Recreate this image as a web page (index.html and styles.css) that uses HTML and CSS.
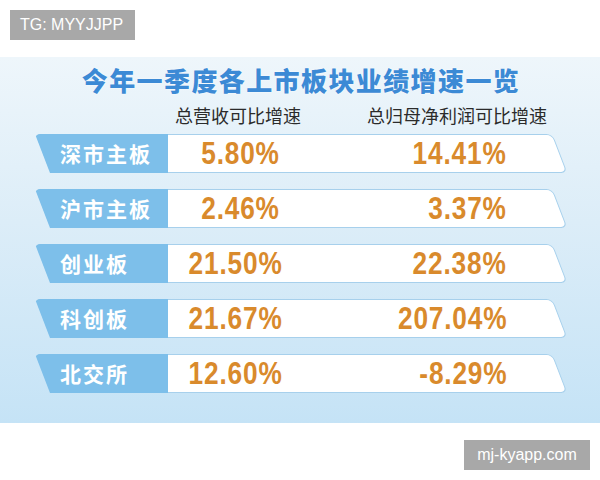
FILE: index.html
```html
<!DOCTYPE html>
<html lang="zh-CN">
<head>
<meta charset="utf-8">
<link rel="stylesheet" href="styles.css">
</head>
<body>
<div class="badge">TG: MYYJJPP</div>
<section class="panel">
  <h1 class="title">今年一季度各上市板块业绩增速一览</h1>
  <div class="heads">
    <span class="head h1">总营收可比增速</span>
    <span class="head h2">总归母净利润可比增速</span>
  </div>
  <div class="rows">
    <div class="row"><div class="label">深市主板</div><div class="vals"><span class="v1"><i>5.80%</i></span><span class="v2"><i>14.41%</i></span></div></div>
    <div class="row"><div class="label">沪市主板</div><div class="vals"><span class="v1"><i>2.46%</i></span><span class="v2"><i>3.37%</i></span></div></div>
    <div class="row"><div class="label">创业板</div><div class="vals"><span class="v1"><i>21.50%</i></span><span class="v2"><i>22.38%</i></span></div></div>
    <div class="row"><div class="label">科创板</div><div class="vals"><span class="v1"><i>21.67%</i></span><span class="v2"><i>207.04%</i></span></div></div>
    <div class="row"><div class="label">北交所</div><div class="vals"><span class="v1"><i>12.60%</i></span><span class="v2"><i>-8.29%</i></span></div></div>
  </div>
</section>
<div class="foot"><div class="mark">mj-kyapp.com</div></div>
</body>
</html>
```
FILE: styles.css
```css
html, body { margin: 0; padding: 0; background: #fff; }
body { width: 600px; height: 480px; overflow: hidden; font-family: "Noto Sans CJK SC", "Liberation Sans", sans-serif; }

.badge {
  margin: 10px 0 0 10px;
  width: 125px; height: 30px;
  box-sizing: border-box;
  padding-left: 10px;
  background: #a8a8a8;
  color: #fff;
  font: 16px/30px "Liberation Sans", Arial, sans-serif;
}

.panel {
  margin-top: 17px;
  height: 366px;
  box-sizing: border-box;
  padding-top: 7px;
  background: linear-gradient(180deg, #eef6fb 0%, #dcedf8 45%, #c5e3f6 100%);
}

.title {
  margin: 0;
  text-align: center;
  font-size: 26px;
  line-height: 32px;
  font-weight: 900;
  letter-spacing: 1.4px;
  color: #3c8ad5;
  text-shadow: 0 0 2px #fff;
  padding-left: 2px;
}

.heads {
  display: flex;
  margin-top: 8px;
  padding-left: 175px;
  font-size: 18px;
  line-height: 22px;
  color: #2b2b2b;
}
.h1 { width: 192px; }

.rows {
  display: flex;
  flex-direction: column;
  gap: 16px;
  margin-top: 8px;
  padding-left: 35px;
}

.row {
  position: relative;
  display: flex;
  width: 532px;
  height: 39px;
}
.row::before {
  content: "";
  position: absolute;
  top: 0; bottom: 0; left: 7.5px; right: 7.5px;
  background: #fff;
  border: 1.5px solid #a7d0ec;
  border-radius: 6px;
  transform: skewX(21deg);
}

.label {
  position: relative;
  width: 133px;
  box-sizing: border-box;
  padding-left: 25px;
  background: #7dbfea;
  clip-path: polygon(0 0, 100% 0, 100% 100%, 15px 100%);
  border-radius: 5px 0 0 5px;
  color: #fff;
  font-size: 21px;
  font-weight: 700;
  letter-spacing: 2px;
  line-height: 39px;
}

.vals {
  position: relative;
  display: flex;
  color: #d98a2c;
  font-family: "Liberation Sans", Arial, sans-serif;
  font-weight: 700;
  font-size: 32px;
  line-height: 39px;
}
.vals span { text-align: right; }
.vals i {
  font-style: normal;
  display: inline-block;
  transform: scaleX(0.82);
  transform-origin: right center;
  letter-spacing: 1px;
}
.v1 { width: 112px; }
.v2 { width: 227px; }

.foot {
  display: flex;
  justify-content: flex-end;
  margin-top: 17px;
  padding-right: 10px;
}
.mark {
  width: 126px; height: 30px;
  background: #a8a8a8;
  color: #fff;
  text-align: center;
  font: 16px/30px "Liberation Sans", Arial, sans-serif;
}
```
